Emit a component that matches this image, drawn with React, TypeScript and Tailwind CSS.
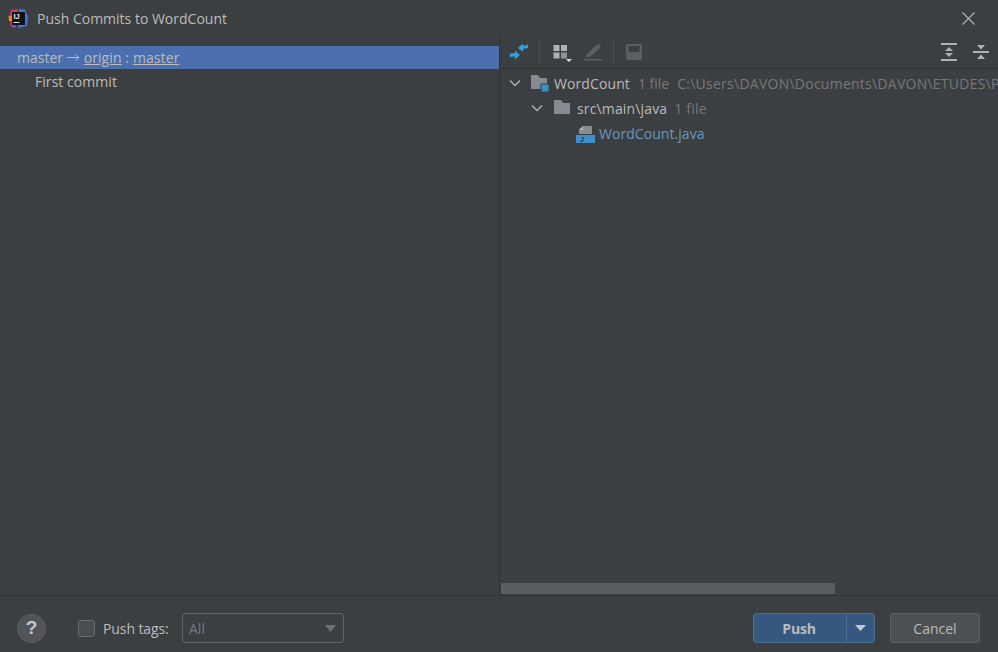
import React from "react";

const Logo = () => (
  <svg width="20" height="20" viewBox="0 0 20 20" className="shrink-0">
    <path d="M1 9 L3 2 L9 1 L12 6 L6 18 L3 18 Z" fill="#d9316f" />
    <path d="M0.5 8 L5 8 L5 13 L1 13 Z" fill="#f58220" />
    <path d="M3 13 L8 13 L8 20 L3 19 Z" fill="#9a3bb0" />
    <path d="M11 1 L17 1.5 L20 9 L19 18 L10 20 Z" fill="#3c78d8" />
    <rect x="4" y="4" width="13" height="13" fill="#111" />
    <text x="5.5" y="11" fill="#eee" fontSize="7.5" fontWeight="700" fontFamily="Liberation Sans, sans-serif">IJ</text>
    <rect x="5.5" y="14" width="6" height="1" fill="#ddd" />
  </svg>
);

const Folder = ({ badge }: { badge?: boolean }) => (
  <svg width="20" height="18" viewBox="0 0 20 18" className="shrink-0">
    <path d="M1 1 H8 L10 4 H17 V15 H1 Z" fill="#868a91" />
    {badge && <rect x="11" y="10" width="8" height="8" fill="#3592c4" stroke="#3c3f41" strokeWidth="1" />}
  </svg>
);

const Chevron = () => (
  <svg width="12" height="8" viewBox="0 0 12 8" className="shrink-0">
    <path d="M1 1.5 L6 6.5 L11 1.5" fill="none" stroke="#afb1b3" strokeWidth="1.4" />
  </svg>
);

const Sep = () => <div className="w-px h-[24px] bg-[#4c4f51]" />;

export default function App() {
  return (
    <div
      className="w-[998px] h-[652px] bg-[#3c3f41] text-[#bbbbbb] flex flex-col overflow-hidden text-[14px]"
      style={{ fontFamily: '"Open Sans", "Noto Sans", sans-serif' }}
    >
      <div className="h-[36px] shrink-0 flex items-center pl-[8px] pr-[23px]">
        <Logo />
        <span className="ml-[9px] text-[14px]">Push Commits to WordCount</span>
        <svg width="13" height="13" viewBox="0 0 13 13" className="ml-auto">
          <path d="M0.5 0.5 L12.5 12.5 M12.5 0.5 L0.5 12.5" stroke="#b4b6b8" strokeWidth="1.1" />
        </svg>
      </div>

      <div className="flex-1 flex min-h-0">
        <div className="w-[499px] shrink-0 pt-[10px] text-[14px]">
          <div className="h-[23px] bg-[#4b6eaf] pl-[17px] flex items-center whitespace-pre">
            <span>master </span>
            <svg width="13" height="9" viewBox="0 0 13 9" className="shrink-0 mr-[4px]">
              <path d="M0 4.5 H11.5 M8.5 1.5 L12 4.5 L8.5 7.5" fill="none" stroke="#bbbbbb" strokeWidth="1" />
            </svg>
            <span className="tracking-[0.1px]"><span className="underline">origin</span> : <span className="underline">master</span></span>
          </div>
          <div className="h-[25px] pl-[35px] flex items-center tracking-[0.05px]">First commit</div>
        </div>

        <div className="flex-1 min-w-0 border-l border-[#323232] flex flex-col">
          <div className="h-[33px] shrink-0 border-b border-[#323232] flex items-center pl-[9px] pr-[9px]">
            <svg width="20" height="18" viewBox="0 0 20 18" className="shrink-0">
              <path d="M9 5 L14 0.5 L14 3 L19 1.5 L19 5 L14 6 L14 9 Z" fill="#2f9fe0" />
              <path d="M11 12 L6 7.5 L6 10 L1 10.5 L1 14 L6 13.5 L6 16.5 Z" fill="#2f9fe0" />
            </svg>
            <div className="ml-[10px]"><Sep /></div>
            <svg width="19" height="18" viewBox="0 0 19 18" className="ml-[13px] mt-[3px] shrink-0">
              <rect x="0.5" y="0" width="6" height="6" fill="#afb1b3" />
              <rect x="8" y="0" width="6" height="6" fill="#afb1b3" />
              <rect x="0.5" y="7.5" width="6" height="6" fill="#afb1b3" />
              <rect x="8" y="7.5" width="6" height="6" fill="#8f9193" />
              <path d="M13 14 H19 L16 17 Z" fill="#dddddd" />
            </svg>
            <svg width="18" height="18" viewBox="0 0 18 18" className="ml-[12px] shrink-0">
              <path d="M2 12 L11 3 L15 0.5 L17 3 L14.5 6.5 L6 14 L2 14 Z" fill="#5c5f61" />
              <rect x="0" y="16" width="18" height="1.5" fill="#5c5f61" />
            </svg>
            <div className="ml-[11px]"><Sep /></div>
            <svg width="16" height="16" viewBox="0 0 16 16" className="ml-[12px] shrink-0">
              <rect x="0" y="0" width="16" height="16" rx="2" fill="#5c5f61" />
              <rect x="2.5" y="2" width="11" height="6" fill="#3c3f41" />
            </svg>
            <svg width="16" height="18" viewBox="0 0 16 18" className="ml-auto shrink-0">
              <rect x="0" y="0" width="16" height="2" fill="#afb1b3" />
              <rect x="0" y="16" width="16" height="2" fill="#afb1b3" />
              <path d="M8 4 L12 8 H4 Z M8 14 L4 10 H12 Z" fill="#afb1b3" />
            </svg>
            <svg width="16" height="18" viewBox="0 0 16 18" className="ml-[16px] shrink-0">
              <rect x="0" y="8" width="16" height="2" fill="#afb1b3" />
              <path d="M8 6.5 L4 2 H12 Z M8 11.5 L12 16 H4 Z" fill="#afb1b3" />
            </svg>
          </div>

          <div className="flex-1 min-h-0 pt-[1px] overflow-hidden whitespace-nowrap">
            <div className="h-[26px] flex items-center pl-[9px]">
              <Chevron />
              <span className="ml-[9px]"><Folder badge /></span>
              <span className="ml-[4px] tracking-[0.1px]">WordCount</span>
              <span className="ml-[8px] text-[#787878]">1 file</span>
              <span className="ml-[8px] text-[#787878] tracking-[0.25px]">C:\Users\DAVON\Documents\DAVON\ETUDES\P</span>
            </div>
            <div className="h-[24px] flex items-center pl-[31px]">
              <Chevron />
              <span className="ml-[10px]"><Folder /></span>
              <span className="ml-[4px] tracking-[0.15px]">src\main\java</span>
              <span className="ml-[7px] text-[#787878] tracking-[0.2px]">1 file</span>
            </div>
            <div className="h-[26px] pt-px flex items-center pl-[76px]">
              <svg width="19" height="18" viewBox="0 0 19 18" className="shrink-0">
                <path d="M3 9 V5 L7 1 H16 V9 Z" fill="#868a91" />
                <path d="M3 5 H7 V1 Z" fill="#b0b3b8" />
                <rect x="0" y="10" width="19" height="8" fill="#3f8ecb" />
                <text x="4" y="17" fontSize="7" fill="#16385a" fontFamily="Liberation Sans, sans-serif" fontWeight="700">J</text>
              </svg>
              <span className="ml-[4px] text-[#6897bb] tracking-[0.05px]">WordCount.java</span>
            </div>
          </div>

          <div className="h-[11px] shrink-0 mb-[1px] ml-[1px]">
            <div className="w-[334px] h-full bg-[#5a5c5e]" />
          </div>
        </div>
      </div>

      <div className="h-[57px] shrink-0 border-t border-[#323232] flex items-center pt-[8px] pl-[17px] pr-[18px]">
        <div className="w-[29px] h-[29px] rounded-full bg-[#515557] border border-[#5e6163] flex items-center justify-center text-[#c8c8c8] font-bold text-[19px]" style={{ fontFamily: '"Liberation Sans", sans-serif' }}>?</div>
        <div className="ml-[32px] w-[17px] h-[17px] rounded-[3px] bg-[#4a4d4f] border border-[#6b6b6b]" />
        <span className="ml-[8px] w-[65px] whitespace-nowrap tracking-[-0.1px]">Push tags:</span>
        <div className="ml-[14px] w-[162px] h-[30px] rounded-[3px] border border-[#646464] flex items-center justify-between pl-[6px] pr-[7px] text-[#6f7a85]">
          <span>All</span>
          <svg width="11" height="7" viewBox="0 0 11 7"><path d="M0 0 H11 L5.5 7 Z" fill="#6e7173" /></svg>
        </div>
        <div className="ml-auto w-[122px] h-[30px] rounded-[3px] bg-[#365880] border border-[#4c708c] flex items-stretch">
          <span className="flex-1 flex items-center justify-center font-bold text-[14px] tracking-[-0.2px] pr-[2px]">Push</span>
          <span className="w-[28px] border-l border-[#4c708c] flex items-center justify-center">
            <svg width="11" height="6" viewBox="0 0 11 6"><path d="M0 0 H11 L5.5 6 Z" fill="#c4c8cc" /></svg>
          </span>
        </div>
        <div className="ml-[15px] w-[90px] h-[30px] rounded-[3px] bg-[#4c5052] border border-[#5e6060] flex items-center justify-center">Cancel</div>
      </div>
    </div>
  );
}
